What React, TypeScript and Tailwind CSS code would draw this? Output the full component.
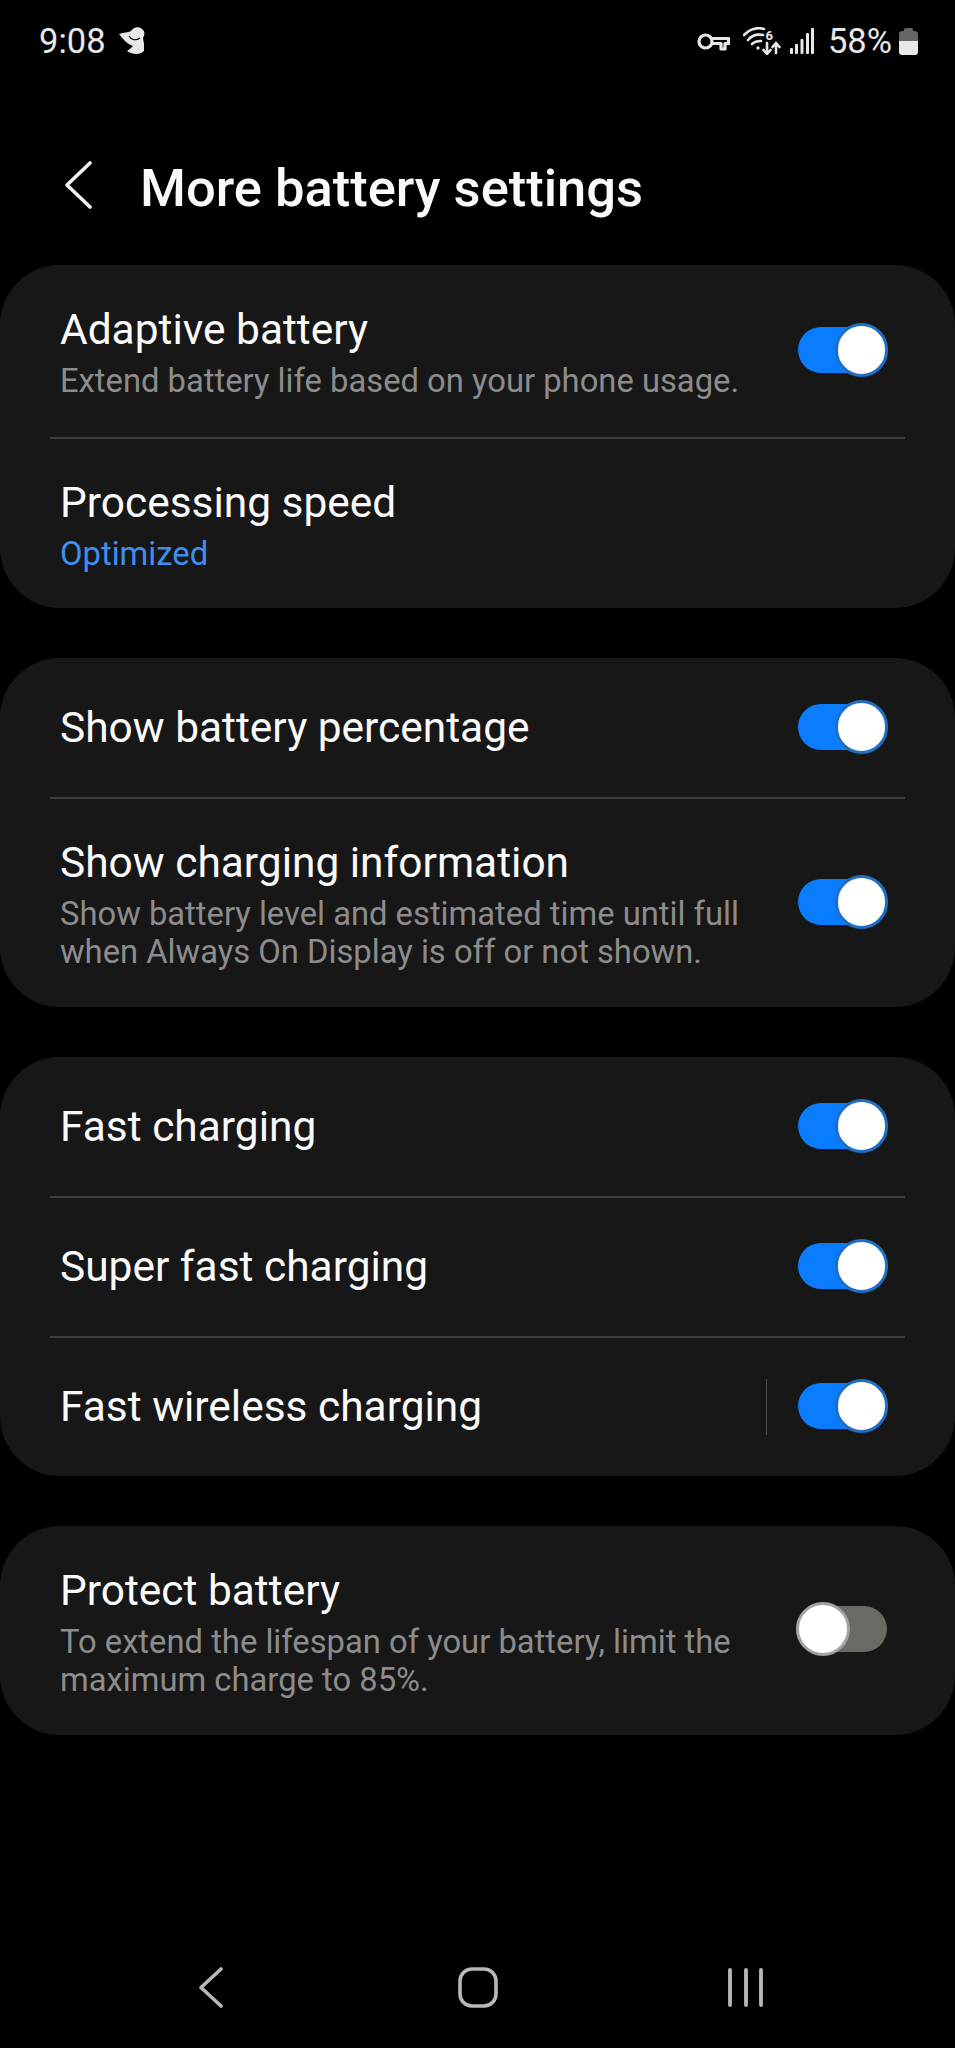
const font = { fontFamily: "Roboto, 'Noto Sans', sans-serif" };

function Toggle({ on = true }: { on?: boolean }) {
  if (!on) {
    return (
      <div className="relative mb-[3px] h-[46px] w-[91px] shrink-0 rounded-full bg-[#6a6a64]">
        <div className="absolute left-0 top-[-4px] h-[54px] w-[54px] rounded-full border-[3px] border-[#a3a3a0] bg-white" />
      </div>
    );
  }
  return (
    <div className="relative mb-[2px] h-[46px] w-[89px] shrink-0 rounded-full bg-[#0a7cff]">
      <div className="absolute right-[-1px] top-[-4px] h-[54px] w-[53px] rounded-full border-[3px] border-[#1f6fc4] bg-white" />
    </div>
  );
}

function Row({
  title,
  sub,
  subBlue,
  toggle,
  off,
  split,
  height,
  divider,
}: {
  title: string;
  sub?: string[];
  subBlue?: boolean;
  toggle?: boolean;
  off?: boolean;
  split?: boolean;
  height: string;
  divider?: boolean;
}) {
  return (
    <>
      <div className={`flex items-center pl-[60px] pr-[68px] ${height}`}>
        <div className={`min-w-0 flex-1 ${sub ? "mb-[4px]" : ""}`}>
          <div className={`text-[42.45px] text-[#fafafa] ${sub ? "leading-[64px]" : "leading-[50px]"}`}>{title}</div>
          {sub?.map((line) => (
            <div
              key={line}
              className={`whitespace-nowrap text-[32.75px] leading-[38px] ${subBlue ? "text-[#3f8fef]" : "text-[#8c8c8c]"}`}
            >
              {line}
            </div>
          ))}
        </div>
        {split && <div className="mr-[31px] h-[56px] w-[1px] bg-[#4a4a4a]" />}
        {toggle && <Toggle on={!off} />}
      </div>
      {divider && <div className="mx-[50px] h-[2px] bg-[#3d3d3d]" />}
    </>
  );
}

function Card({ children }: { children: React.ReactNode }) {
  return <div className="rounded-[60px] bg-[#171717]">{children}</div>;
}

function StatusBar() {
  return (
    <div className="flex h-[82px] items-center justify-between pl-[39px] pr-[37px] text-[#e8e8e8]">
      <div className="flex items-center gap-[13px]">
        <span className="text-[34.5px] leading-none">9:08</span>
        <svg width="26" height="28" viewBox="0 0 26 28" fill="#e8e8e8">
          <path d="M0 7 C5 5 9 6 12 4 C14 0 20 -1 23 2 C26 4 26 8 24 11 L25 17 L25 24 C21 28 14 28 8 24 L12 21 L14 19 C8 17 4 12 0 7 Z" />
          <path d="M10 9 C12 13 17 14 21 11" fill="none" stroke="#000" strokeWidth="1.2" />
        </svg>
      </div>
      <div className="flex items-center">
        <svg width="33" height="19" viewBox="0 0 33 19" fill="none" stroke="#e8e8e8" strokeWidth="3.2">
          <circle cx="8.5" cy="9.5" r="6.5" />
          <path d="M15 6.5 H31.5 V11.5 H28 V17 H24 V11.5 H15" strokeLinejoin="round" />
        </svg>
        <svg className="ml-[13px]" width="39" height="28" viewBox="0 0 39 28" fill="none" stroke="#e8e8e8" strokeWidth="2.6" strokeLinecap="round">
          <path d="M1 8 C7 2 14 0 21 2" />
          <path d="M5 13 C9 8 15 7 20 8" />
          <path d="M9 17 C12 14 15 14 18 14" />
          <circle cx="15" cy="21" r="1.7" fill="#e8e8e8" stroke="none" />
          <path d="M24 16 V27 M20.5 23 L24 27 L27.5 23" />
          <path d="M33 26 V16 M29.5 20 L33 16 L36.5 20" />
          <text x="22.5" y="12.5" fontSize="13" fontWeight="700" fill="#e8e8e8" stroke="none">6</text>
        </svg>
        <svg className="ml-[8px]" width="24" height="26" viewBox="0 0 24 26" fill="#e8e8e8">
          <rect x="0" y="20" width="3" height="6" rx="1" />
          <rect x="5" y="16" width="3" height="10" rx="1" />
          <rect x="10.5" y="11" width="3" height="15" rx="1" />
          <rect x="16" y="5" width="3" height="21" rx="1" />
          <rect x="21" y="0" width="3" height="26" rx="1" />
        </svg>
        <span className="ml-[14px] text-[34.5px] leading-none">58%</span>
        <svg className="ml-[7px]" width="19" height="27" viewBox="0 0 19 27">
          <path d="M5 3 V1.5 Q5 0 6.5 0 H12.5 Q14 0 14 1.5 V3 H15.5 Q19 3 19 6 V13 H0 V6 Q0 3 3.5 3 Z" fill="#666" />
          <path d="M0 13 H19 V24 Q19 27 16 27 H3 Q0 27 0 24 Z" fill="#e8e8e8" />
        </svg>
      </div>
    </div>
  );
}

function NavBar() {
  return (
    <div className="flex h-[81px] items-start pl-[199px]">
      <svg className="shrink-0" width="24" height="41" viewBox="0 0 24 41" fill="none" stroke="#b8b8b8" strokeWidth="3.6" strokeLinecap="round" strokeLinejoin="round">
        <path d="M22 2 L2 20.5 L22 39" />
      </svg>
      <svg className="ml-[235px] shrink-0" width="40" height="41" viewBox="0 0 40 41" fill="none" stroke="#b8b8b8" strokeWidth="3.6">
        <rect x="2" y="2" width="36" height="37" rx="12" />
      </svg>
      <svg className="ml-[230px] shrink-0" width="36" height="41" viewBox="0 0 36 41" fill="none" stroke="#b8b8b8" strokeWidth="3.8" strokeLinecap="round">
        <path d="M2 3 V38 M18 3 V38 M33 3 V38" />
      </svg>
    </div>
  );
}

export default function App() {
  return (
    <div className="flex h-[2048px] w-[955px] flex-col bg-black" style={font}>
      <StatusBar />
      <div className="flex h-[183px] items-start pl-[64px] pt-[79px]">
        <svg width="28" height="48" viewBox="0 0 28 48" fill="none" stroke="#f2f2f2" strokeWidth="3.6" strokeLinecap="round" strokeLinejoin="round">
          <path d="M26 2 L3 24 L26 46" />
        </svg>
        <h1 className="ml-[48px] mt-[-3px] text-[52.5px] font-medium leading-[60px] text-[#fafafa]">More battery settings</h1>
      </div>

      <div className="flex flex-col gap-[50px]">
        <Card>
          <Row height="h-[172px]" title="Adaptive battery" sub={["Extend battery life based on your phone usage."]} toggle divider />
          <Row height="h-[169px]" title="Processing speed" sub={["Optimized"]} subBlue />
        </Card>
        <Card>
          <Row height="h-[139px]" title="Show battery percentage" toggle divider />
          <Row height="h-[208px]" title="Show charging information" sub={["Show battery level and estimated time until full", "when Always On Display is off or not shown."]} toggle />
        </Card>
        <Card>
          <Row height="h-[139px]" title="Fast charging" toggle divider />
          <Row height="h-[138px]" title="Super fast charging" toggle divider />
          <Row height="h-[138px]" title="Fast wireless charging" toggle split />
        </Card>
        <Card>
          <Row height="h-[209px]" title="Protect battery" sub={["To extend the lifespan of your battery, limit the", "maximum charge to 85%."]} toggle off />
        </Card>
      </div>

      <div className="mt-auto">
        <NavBar />
      </div>
    </div>
  );
}
